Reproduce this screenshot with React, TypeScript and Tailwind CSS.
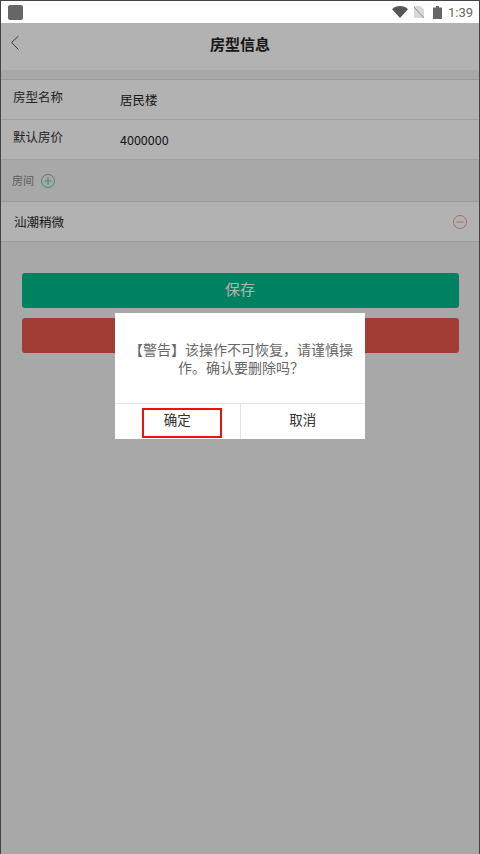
const font = { fontFamily: '"Noto Sans CJK SC", "Liberation Sans", sans-serif' };

function StatusBar() {
  return (
    <div className="flex h-[22px] items-center justify-between bg-white pl-[8px] pr-[7px]">
      <div className="h-[15px] w-[15px] rounded-[2px] bg-[#666666]" />
      <div className="flex items-center">
        <svg width="16" height="12" viewBox="0 0 16 12" className="mr-[6px]">
          <path d="M0 3.200C2.200 1.200 5 0 8 0s5.800 1.200 8 3.200L8 12z" fill="#555555" />
        </svg>
        <svg width="10" height="12" viewBox="0 0 10 12" className="mr-[9px]">
          <path d="M0 0h6.500L10 3.500V12H0z" fill="#d8d8d8" />
          <path d="M0 1l10 11" stroke="#8f8f8f" strokeWidth="1" />
        </svg>
        <svg width="9" height="13" viewBox="0 0 9 13" className="mr-[6px]">
          <path d="M3 0h3v1.500h3V13H0V1.500h3z" fill="#666666" />
        </svg>
        <span className="text-[13px] leading-none text-[#666666]" style={{ fontFamily: "Roboto, sans-serif" }}>
          1:39
        </span>
      </div>
    </div>
  );
}

function Row({ label, value }: { label: string; value: string }) {
  return (
    <div className="flex h-[40px] border-b border-[#e6e6e6] bg-white pl-[13px]">
      <span className="mt-[7px] w-[107px] text-[12.5px] leading-[20px] text-[#333333]">{label}</span>
      <span className="mt-[10px] text-[12.5px] leading-[20px] text-[#222222]">{value}</span>
    </div>
  );
}

export default function App() {
  return (
    <div className="relative h-[854px] w-[480px] overflow-hidden bg-[#f1f1f1] pt-px" style={font}>
      <StatusBar />

      <div className="relative h-[47px] bg-white">
        <svg width="10" height="16" viewBox="0 0 10 16" className="absolute left-[10px] top-[12px]">
          <path d="M8.500 1L1.500 7.500L8.500 14.500" fill="none" stroke="#555555" strokeWidth="1" />
        </svg>
        <div className="pt-[9px] text-center text-[15px] font-bold leading-[24px] text-[#222222]">房型信息</div>
      </div>

      <div className="h-[10px] border-b border-[#dcdcdc] bg-[#f1f1f1]" />
      <Row label="房型名称" value="居民楼" />
      <Row label="默认房价" value="4000000" />

      <div className="flex h-[42px] items-center border-b border-[#e0e0e0] pl-[12px]">
        <span className="text-[11px] text-[#888888]">房间</span>
        <svg width="14" height="14" viewBox="0 0 14 14" className="ml-[7px]">
          <circle cx="7" cy="7" r="6.500" fill="none" stroke="#3fb598" strokeWidth="0.8" />
          <path d="M7 3.500v7M3.500 7h7" stroke="#3fb598" strokeWidth="0.8" />
        </svg>
      </div>

      <div className="flex h-[40px] items-center justify-between border-b border-[#e0e0e0] bg-white pl-[14px] pr-[13px]">
        <span className="pt-[2px] text-[12.5px] text-[#222222]">汕潮稍微</span>
        <svg width="14" height="14" viewBox="0 0 14 14">
          <circle cx="7" cy="7" r="6.500" fill="none" stroke="#ea8078" strokeWidth="0.8" />
          <path d="M3.500 7h7" stroke="#ea8078" strokeWidth="0.8" />
        </svg>
      </div>

      <div className="flex flex-col gap-[10px] px-[21.5px] pt-[31px]">
        <div className="flex h-[35px] items-center justify-center rounded-[3px] bg-[#00b98a] pb-[3px] text-[15px] text-white">保存</div>
        <div className="h-[35px] rounded-[3px] bg-[#e9584d]" />
      </div>

      {/* dim layer under the status bar */}
      <div className="absolute inset-x-0 bottom-0 top-[23px] bg-black/30" />

      {/* device frame */}
      <div className="pointer-events-none absolute inset-0 border border-b-0 border-[#444444]" />

      <div className="absolute left-[115px] top-[313px] w-[250px] bg-white">
        <div className="flex h-[90px] items-center justify-center pl-[14px] pr-[12px] text-center text-[14px] leading-[18px] text-[#666666]">
          【警告】该操作不可恢复，请谨慎操作。确认要删除吗？
        </div>
        <div className="flex h-[36px] border-t border-[#e5e5e5] text-[13.5px] text-[#333333]">
          <div className="flex flex-1 items-center justify-center border-r border-[#e5e5e5] pb-[5px]">确定</div>
          <div className="flex flex-1 items-center justify-center pb-[5px]">取消</div>
        </div>
        {/* red marker drawn over the button */}
        <div className="absolute left-[27px] top-[95px] h-[30px] w-[80px] border-2 border-[#f01010]" />
      </div>
    </div>
  );
}
